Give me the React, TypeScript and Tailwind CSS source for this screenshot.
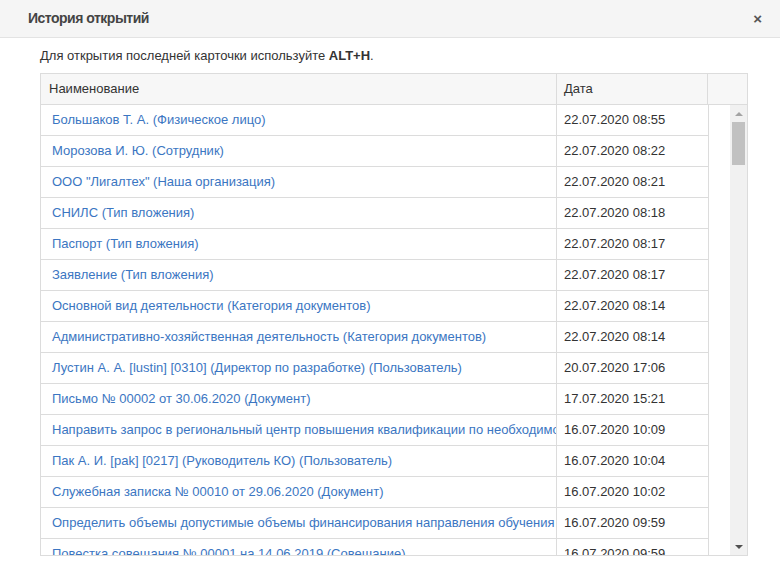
const rows: [string, string][] = [
  ["Большаков Т. А. (Физическое лицо)", "22.07.2020 08:55"],
  ["Морозова И. Ю. (Сотрудник)", "22.07.2020 08:22"],
  ['ООО "Лигалтех" (Наша организация)', "22.07.2020 08:21"],
  ["СНИЛС (Тип вложения)", "22.07.2020 08:18"],
  ["Паспорт (Тип вложения)", "22.07.2020 08:17"],
  ["Заявление (Тип вложения)", "22.07.2020 08:17"],
  ["Основной вид деятельности (Категория документов)", "22.07.2020 08:14"],
  ["Административно-хозяйственная деятельность (Категория документов)", "22.07.2020 08:14"],
  ["Лустин А. А. [lustin] [0310] (Директор по разработке) (Пользователь)", "20.07.2020 17:06"],
  ["Письмо № 00002 от 30.06.2020 (Документ)", "17.07.2020 15:21"],
  ["Направить запрос в региональный центр повышения квалификации по необходимости обучения (Задача)", "16.07.2020 10:09"],
  ["Пак А. И. [pak] [0217] (Руководитель КО) (Пользователь)", "16.07.2020 10:04"],
  ["Служебная записка № 00010 от 29.06.2020 (Документ)", "16.07.2020 10:02"],
  ["Определить объемы допустимые объемы финансирования направления обучения (Задача)", "16.07.2020 09:59"],
  ["Повестка совещания № 00001 на 14.06.2019 (Совещание)", "16.07.2020 09:59"],
];

export default function App() {
  return (
    <div className="w-[780px] h-[576px] bg-white text-[#333] font-['Liberation_Sans',Arial,sans-serif] overflow-hidden">
      <div className="h-[38px] bg-[#f5f5f5] border-b border-[#e3e3e3] flex items-center justify-between pl-[28px] pr-[18px]">
        <span className="text-[14px] font-bold tracking-[-0.5px] text-[#444]">История открытий</span>
        <span className="text-[15px] font-bold text-[#555] leading-none">×</span>
      </div>

      <div className="px-[40px] pr-[32px]">
        <p className="h-[35px] flex items-center text-[13px] text-[#333]">
          Для открытия последней карточки используйте&nbsp;<b>ALT+H</b>.
        </p>

        <div className="w-[708px] border border-[#dcdcdc]">
          <div className="flex h-[31px] bg-[#f7f7f7] border-b border-[#dcdcdc] text-[13px] text-[#333]">
            <div className="w-[516px] border-r border-[#dcdcdc] flex items-center pl-[8px]">Наименование</div>
            <div className="w-[151px] border-r border-[#dcdcdc] flex items-center pl-[7px]">Дата</div>
            <div className="flex-1" />
          </div>

          <div className="flex h-[450px]">
            <div className="w-[668px] overflow-hidden border-r border-[#dcdcdc]">
              {rows.map(([name, date], i) => (
                <div key={i} className="flex h-[31px] border-b border-[#dcdcdc] text-[13px]">
                  <div className="w-[516px] border-r border-[#dcdcdc] flex items-center pl-[11px] whitespace-nowrap overflow-hidden text-[#3b76c2]">
                    {name}
                  </div>
                  <div className="flex-1 flex items-center pl-[7px] whitespace-nowrap text-[#333]">{date}</div>
                </div>
              ))}
            </div>
            <div className="flex-1 flex justify-end">
              <div className="w-[17px] bg-[#f1f1f1] flex flex-col items-center">
                <div className="h-[17px] flex items-center justify-center">
                  <div className="w-0 h-0 border-l-[4px] border-r-[4px] border-b-[4px] border-l-transparent border-r-transparent border-b-[#a3a3a3]" />
                </div>
                <div className="w-[13px] h-[43px] bg-[#c1c1c1]" />
                <div className="flex-1" />
                <div className="h-[17px] flex items-center justify-center">
                  <div className="w-0 h-0 border-l-[4px] border-r-[4px] border-t-[4px] border-l-transparent border-r-transparent border-t-[#505050]" />
                </div>
              </div>
            </div>
          </div>
        </div>
      </div>
    </div>
  );
}
